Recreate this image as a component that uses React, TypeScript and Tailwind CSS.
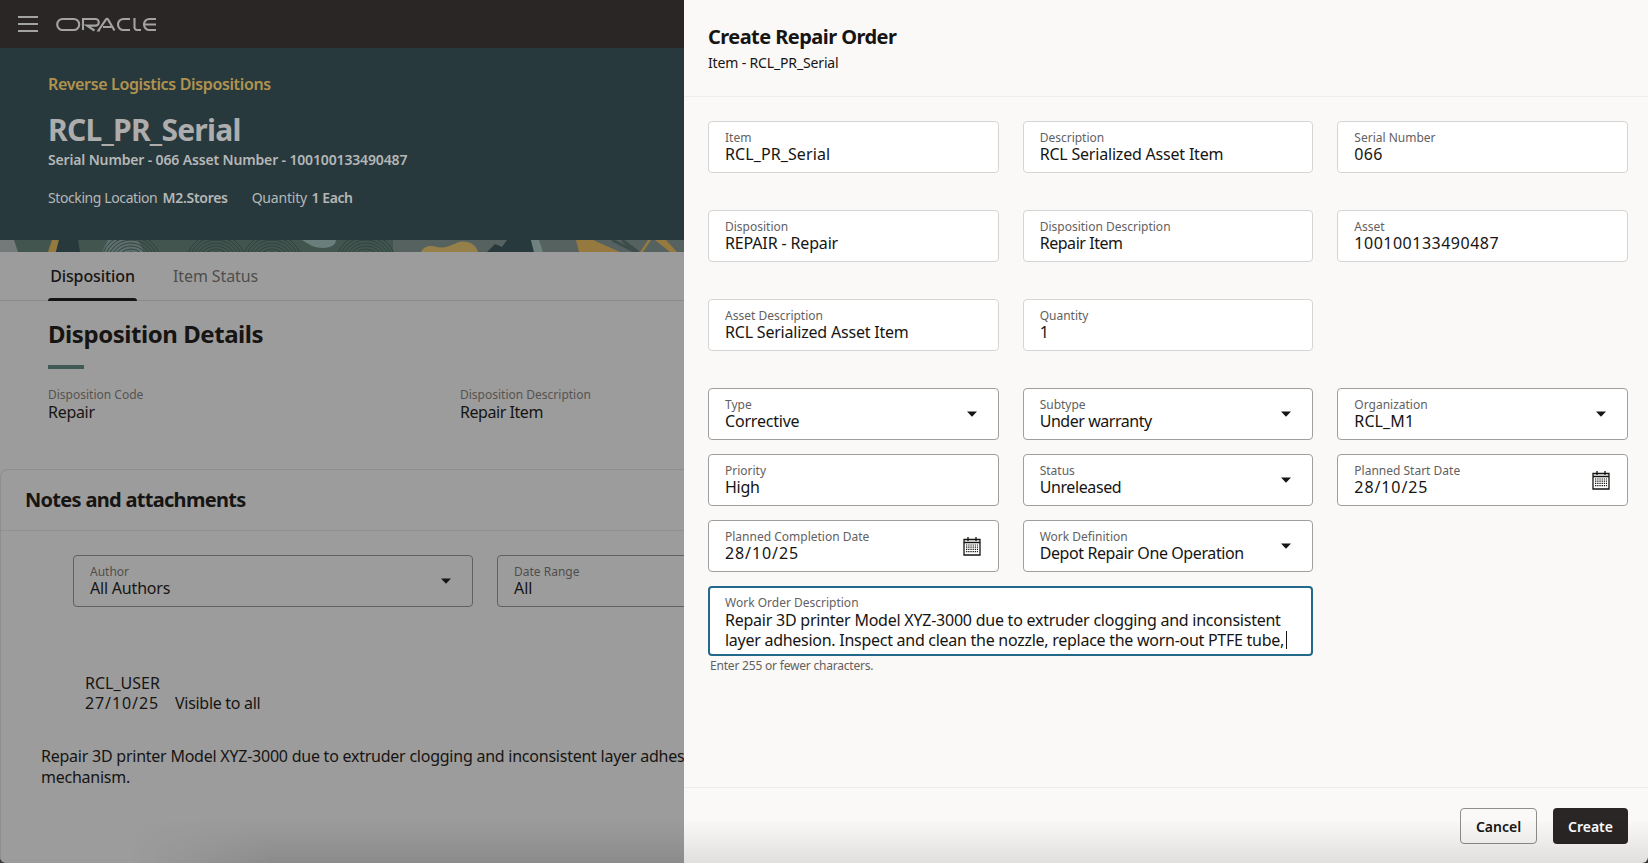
import { ReactNode } from "react";

function Caret({ className = "text-[#161513]" }: { className?: string }) {
  return (
    <svg width="10" height="6" viewBox="0 0 10 6" className={className}>
      <path d="M0 0.5h10L5 5.8z" fill="currentColor" />
    </svg>
  );
}

function CalendarIcon() {
  return (
    <svg width="18" height="20" viewBox="0 0 18 20" className="text-[#161513]">
      <path d="M1 3.5h16v15.5H1z" fill="none" stroke="currentColor" strokeWidth="1.3" />
      <path d="M1 6.5h16" stroke="currentColor" strokeWidth="1.5" />
      <path d="M5 1v4M13 1v4" stroke="currentColor" strokeWidth="1.3" />
      <path d="M3 9h12M3 11.2h12M3 13.4h12M3 15.6h12" stroke="currentColor" strokeWidth="1.2" strokeDasharray="1.3 0.9" />
    </svg>
  );
}

function OracleLogo() {
  return (
    <svg width="101" height="15" viewBox="0 0 101 15" fill="none" stroke="#a3a3a1" strokeWidth="2.1">
      <rect x="1.2" y="2" width="22" height="11" rx="5.5" />
      <path d="M27 13V2h12.500a3.200 3.200 0 0 1 0 6.600H31L38.500 13.500" />
      <path d="M44 13.500h-1.500L50 2.400c.6-.8 1.400-.8 2 0L58.500 13.500M47 10h8.500" />
      <path d="M74 2h-6.500a5.500 5.500 0 0 0 0 11H74" />
      <path d="M78.500 1v9.500a2.500 2.500 0 0 0 2.500 2.500h4" />
      <path d="M100 2h-6.500a5.500 5.500 0 0 0 0 11H100M88.500 7.500H100" />
    </svg>
  );
}

function Band() {
  const arcs = [131, 216, 272, 366];
  const rings = [9, 12, 15, 18, 21, 24, 27, 30];
  return (
    <svg width="684" height="12" viewBox="0 0 684 12" preserveAspectRatio="none" className="block">
      <rect width="684" height="12" fill="#42564f" />
      <rect x="393" width="291" height="12" fill="#56625f" />
      <path d="M0 0h14l4 12H0z" fill="#74797a" />
      <path d="M52 0h7l-3 12h-8z" fill="#96793f" />
      <path d="M59 0h19l2 12H56z" fill="#28393d" />
      <path d="M108 0h30l6 12h-42z" fill="#5f6f6c" />
      <path d="M302 0h34c0 8-14 10-24 6z" fill="#6a7f7b" />
      {arcs.map((x) =>
        rings.map((r) => (
          <circle key={`${x}-${r}`} cx={x} cy={24} r={r} fill="none" stroke="#2e403d" strokeWidth="0.9" />
        )),
      )}
      <path d="M421 12c3-6 9-7 16-5 8 2 14-2 22-5 8-2 17 2 19 10z" fill="#96804a" />
      <path d="M487 12l8-8 7 3 5-7h24l3 12z" fill="#28393d" />
      <path d="M531 0h8l4 12h-9z" fill="#6f8280" />
      <path d="M576 0h17l27 12h-41z" fill="#96793f" />
      <path d="M640 12l8-12h3l-8 12zM655 0h11l11 12h-7z" fill="#96793f" />
      <path d="M612 0l24 12M622 0l16 12" stroke="#3c4c4a" strokeWidth="3" />
    </svg>
  );
}

type FieldProps = {
  label: string;
  value: string;
  editable?: boolean;
  right?: ReactNode;
  track?: string;
};

function Field({ label, value, editable, right, track = "tracking-[-0.3px]" }: FieldProps) {
  return (
    <div
      className={`flex h-[52px] items-center justify-between rounded-[4px] border bg-white pl-4 ${
        editable ? "border-[#a09f9d]" : "border-[#d6d5d3] bg-[#fcfbfa]"
      } ${right ? "pr-[17px]" : ""}`}
    >
      <div className="min-w-0">
        <div className="text-[12px] leading-[14px] text-[#63615f]">{label}</div>
        <div className={`text-[16px] leading-[18px] text-[#161513] ${track}`}>{value}</div>
      </div>
      {right}
    </div>
  );
}

function DropCaret() {
  return (
    <div className="pr-[4px]">
      <Caret />
    </div>
  );
}

function LeftPage() {
  return (
    <div className="flex h-full w-[684px] shrink-0 flex-col overflow-hidden rounded-bl-[6px] bg-[#9d9c9c] text-[#161513]">
      <div className="flex h-[48px] items-center gap-[18px] bg-[#2a2625] pl-[18px]">
        <div className="flex w-[20px] flex-col gap-[5px]">
          <div className="h-[2px] bg-[#a3a3a1]" />
          <div className="h-[2px] bg-[#a3a3a1]" />
          <div className="h-[2px] bg-[#a3a3a1]" />
        </div>
        <OracleLogo />
      </div>
      <div className="h-[192px] bg-[#28393d] pl-[48px] pt-[25px]">
        <div className="text-[16px] font-semibold leading-[22px] tracking-[-0.35px] text-[#b0934f]">
          Reverse Logistics Dispositions
        </div>
        <div className="mt-[16px] text-[30px] font-bold leading-[38px] tracking-[-0.75px] text-[#adadad]">
          RCL_PR_Serial
        </div>
        <div className="mt-[1px] text-[14px] font-semibold leading-[20px] tracking-[-0.15px] text-[#b5b7b7]">
          Serial Number - 066 Asset Number - 100100133490487
        </div>
        <div className="mt-[18px] flex gap-6 text-[14px] leading-[20px] text-[#b5b7b7]">
          <span className="tracking-[-0.4px]">
            Stocking Location <span className="ml-[2px] font-semibold tracking-[-0.3px]">M2.Stores</span>
          </span>
          <span className="tracking-[-0.2px]">
            Quantity <span className="ml-[1px] font-semibold tracking-[-0.4px]">1 Each</span>
          </span>
        </div>
      </div>
      <Band />
      <div className="flex h-[49px] items-start gap-[36px] border-b border-[#8b8a8a] pl-[48px]">
        <div className="relative h-[48px] w-[89px] pt-[13px] text-center text-[16px] font-medium leading-[22px] tracking-[-0.1px]">
          Disposition
          <div className="absolute bottom-[-1px] left-0 right-0 h-[3px] rounded-t-[3px] bg-[#161513]" />
        </div>
        <div className="pt-[13px] text-[16px] leading-[22px] tracking-[-0.1px] text-[#4f4e4c]">Item Status</div>
      </div>
      <div className="pl-[48px] pt-[16px]">
        <div className="text-[24px] font-bold leading-[34px] tracking-[-0.45px]">Disposition Details</div>
        <div className="mt-[14px] h-[4px] w-[36px] bg-[#3f5a57]" />
        <div className="mt-[18px] flex">
          <div className="w-[412px]">
            <div className="text-[12px] leading-[16px] text-[#55534f]">Disposition Code</div>
            <div className="text-[16px] leading-[18px] tracking-[-0.3px]">Repair</div>
          </div>
          <div>
            <div className="whitespace-nowrap text-[12px] leading-[16px] text-[#55534f]">Disposition Description</div>
            <div className="whitespace-nowrap text-[16px] leading-[18px] tracking-[-0.45px]">Repair Item</div>
          </div>
        </div>
      </div>
      <div className="mt-[48px] flex-1 rounded-tl-[8px] border-l border-t border-[#8f8e8e]">
        <div className="flex h-[61px] items-center border-b border-[#929191] pl-[24px] text-[20px] font-bold tracking-[-0.7px]">
          Notes and attachments
        </div>
        <div className="flex gap-6 pl-[72px] pt-[24px]">
          <div className="flex h-[52px] w-[400px] shrink-0 items-center justify-between rounded-[4px] border border-[#626160] pl-4 pr-[21px]">
            <div>
              <div className="text-[12px] leading-[14px] text-[#4f4e4c]">Author</div>
              <div className="text-[16px] leading-[18px] tracking-[-0.2px]">All Authors</div>
            </div>
            <Caret />
          </div>
          <div className="flex h-[52px] w-[300px] shrink-0 items-center rounded-[4px] border border-[#626160] pl-4">
            <div>
              <div className="text-[12px] leading-[14px] text-[#4f4e4c]">Date Range</div>
              <div className="text-[16px] leading-[18px]">All</div>
            </div>
          </div>
        </div>
        <div className="pl-[84px] pt-[66px] text-[16px] leading-[20px]">
          <div>RCL_USER</div>
          <div className="flex gap-4">
            <span className="tracking-[0.9px]">27/10/25</span>
            <span className="tracking-[-0.3px]">Visible to all</span>
          </div>
        </div>
        <div className="w-[1000px] pl-[40px] pt-[33px] text-[16px] leading-[21px] tracking-[-0.24px]">
          Repair 3D printer Model XYZ-3000 due to extruder clogging and inconsistent layer adhesion. Inspect and clean the
          <br />
          mechanism.
        </div>
      </div>
    </div>
  );
}

function RepairPanel() {
  return (
    <div className="flex h-full flex-1 flex-col rounded-br-[6px] bg-[#faf9f7] text-[#161513]">
      <div className="h-[97px] shrink-0 border-b border-[#eeedeb] pl-[24px] pt-[23px]">
        <div className="text-[20px] font-bold leading-[28px] tracking-[-0.55px]">Create Repair Order</div>
        <div className="mt-[2px] text-[14px] leading-[20px] tracking-[-0.15px]">Item - RCL_PR_Serial</div>
      </div>
      <div className="flex-1 px-[20px] pl-[24px] pt-[24px]">
        <div className="grid grid-cols-3 gap-x-6 gap-y-[37px]">
          <Field label="Item" value="RCL_PR_Serial" track="tracking-[0.1px]" />
          <Field label="Description" value="RCL Serialized Asset Item" track="tracking-[-0.2px]" />
          <Field label="Serial Number" value="066" track="tracking-[0.3px]" />
          <Field label="Disposition" value="REPAIR - Repair" track="tracking-[-0.15px]" />
          <Field label="Disposition Description" value="Repair Item" track="tracking-[-0.45px]" />
          <Field label="Asset" value="100100133490487" track="tracking-[0.5px]" />
          <Field label="Asset Description" value="RCL Serialized Asset Item" track="tracking-[-0.2px]" />
          <Field label="Quantity" value="1" />
        </div>
        <div className="mt-[37px] grid grid-cols-3 gap-x-6 gap-y-[14px]">
          <Field editable label="Type" value="Corrective" track="tracking-[-0.2px]" right={<DropCaret />} />
          <Field editable label="Subtype" value="Under warranty" track="tracking-[-0.45px]" right={<DropCaret />} />
          <Field editable label="Organization" value="RCL_M1" track="tracking-[0.1px]" right={<DropCaret />} />
          <Field editable label="Priority" value="High" />
          <Field editable label="Status" value="Unreleased" track="tracking-[-0.4px]" right={<DropCaret />} />
          <Field editable label="Planned Start Date" value="28/10/25" track="tracking-[0.9px]" right={<CalendarIcon />} />
          <Field editable label="Planned Completion Date" value="28/10/25" track="tracking-[0.9px]" right={<CalendarIcon />} />
          <Field editable label="Work Definition" value="Depot Repair One Operation" track="tracking-[-0.4px]" right={<DropCaret />} />
          <div className="col-start-1 col-end-3">
            <div className="h-[70px] rounded-[4px] border-2 border-[#22698c] bg-white pl-[15px] pt-[8px]">
              <div className="text-[12px] leading-[14px] text-[#63615f]">Work Order Description</div>
              <div className="whitespace-nowrap text-[16px] leading-[20px] tracking-[-0.24px]">
                Repair 3D printer Model XYZ-3000 due to extruder clogging and inconsistent
                <br />
                <span className="tracking-[-0.27px]">layer adhesion. Inspect and clean the nozzle, replace the worn-out PTFE tube,</span>
                <span className="-mt-[8px] ml-[2px] inline-block h-[18px] w-px translate-y-[3px] bg-[#161513]" />
              </div>
            </div>
            <div className="pl-[2px] pt-[2px] text-[12px] leading-[16px] tracking-[-0.2px] text-[#63615f]">
              Enter 255 or fewer characters.
            </div>
          </div>
        </div>
      </div>
      <div className="flex h-[76px] shrink-0 items-start justify-end gap-4 border-t border-[#eeedeb] pr-[20px] pt-[20px]">
        <button className="h-[36px] w-[77px] rounded-[4px] border border-[#8f8e8c] text-[14px] font-semibold">Cancel</button>
        <button className="h-[36px] w-[75px] rounded-[4px] bg-[#2a2625] text-[14px] font-semibold text-white">Create</button>
      </div>
    </div>
  );
}

export default function App() {
  return (
    <div className="relative flex h-[863px] w-[1648px] overflow-hidden bg-[#3a3a3a] font-['Noto_Sans',sans-serif]">
      <LeftPage />
      <RepairPanel />
      <div className="absolute bottom-0 left-[130px] right-0 h-[44px] bg-gradient-to-b from-transparent to-black/10 [mask-image:linear-gradient(to_right,transparent,black_140px)]" />
    </div>
  );
}
